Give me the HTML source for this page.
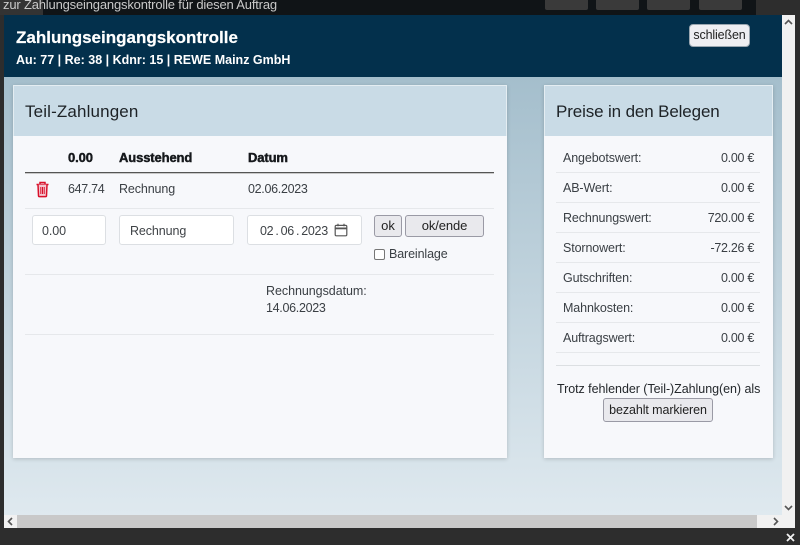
<!DOCTYPE html>
<html lang="de"><head><meta charset="utf-8"><title>Zahlungseingangskontrolle</title>
<style>
*{box-sizing:border-box}
html,body{margin:0;padding:0;width:800px;height:545px;overflow:hidden;background:#2d2d2d;font-family:"Liberation Sans",sans-serif;color:#333}
.a{position:absolute;white-space:nowrap}
.t{position:absolute;white-space:nowrap;font-size:12.5px;line-height:16px;color:#3a3f44;letter-spacing:-.12px}
.d{letter-spacing:-.3px}
.b{font-size:13px;font-weight:700;color:#16191c;letter-spacing:-.12px;-webkit-text-stroke:.45px #16191c}
.l{position:absolute;height:1px;background:#e6e8eb}
.inp{position:absolute;background:#fff;border:1px solid #dcdfe3;border-radius:3px;height:30px;top:215px;font-size:12.5px;line-height:30px;color:#3f4347;letter-spacing:-.1px}
.btn{position:absolute;background:#e9e9ed;border:1px solid #9a9aa5;border-radius:3px;font-size:12.5px;color:#222;text-align:center;letter-spacing:-.05px;white-space:nowrap}
.panel{position:absolute;top:85px;height:373px;background:#f7f8fb;box-shadow:0 1px 4px rgba(0,0,0,.18)}
.ph{position:absolute;left:0;top:0;right:0;height:51px;background:#c9dbe6;border:1px solid #e4edf2;border-bottom:0;font-size:17px;line-height:52px;color:#1d2226;padding-left:11px;white-space:nowrap}
</style></head><body>
<div class="a" style="left:0;top:0;width:43px;height:15px;background:#333"></div>
<div class="a" style="left:43px;top:0;width:713px;height:15px;background:#101417"></div>
<div class="a" style="left:3px;top:-3px;font-size:13px;line-height:16px;color:#c9c9c9;letter-spacing:-.18px">zur Zahlungseingangskontrolle für diesen Auftrag</div>
<div class="a" style="left:545px;top:-4px;width:43px;height:14px;background:#3a3a3a;border-radius:2px"></div>
<div class="a" style="left:596px;top:-4px;width:43px;height:14px;background:#3a3a3a;border-radius:2px"></div>
<div class="a" style="left:647px;top:-4px;width:43px;height:14px;background:#3a3a3a;border-radius:2px"></div>
<div class="a" style="left:699px;top:-4px;width:43px;height:14px;background:#3a3a3a;border-radius:2px"></div>

<!-- modal -->
<div class="a" style="left:4px;top:15px;width:778px;height:500px;background:linear-gradient(#a4beCC 60px,#dfe9ef 100%)"></div>
<div class="a" style="left:4px;top:15px;width:778px;height:62px;background:#03304c"></div>
<div class="a" style="left:16px;top:27px;font-size:17px;line-height:22px;font-weight:700;color:#fff;-webkit-text-stroke:.2px #fff">Zahlungseingangskontrolle</div>
<div class="a" style="left:16px;top:52px;font-size:12.5px;line-height:16px;font-weight:700;color:#fff">Au: 77 | Re: 38 | Kdnr: 15 | REWE Mainz GmbH</div>
<div class="btn" style="left:689px;top:24px;width:61px;height:23px;line-height:21px;background:#eeeef2;border-color:#9aa6b0;border-radius:4px;letter-spacing:-.15px">schließen</div>

<!-- left panel -->
<div class="panel" style="left:13px;width:494px"><div class="ph" style="letter-spacing:.14px">Teil-Zahlungen</div></div>
<div class="t b" style="left:68px;top:150px">0.00</div>
<div class="t b" style="left:119px;top:150px">Ausstehend</div>
<div class="t b" style="left:248px;top:150px">Datum</div>
<div class="a" style="left:25px;top:172px;width:469px;height:1px;background:#555;box-shadow:0 1px 0 #c8c8c8"></div>
<svg class="a" style="left:35px;top:181px" width="15" height="17" viewBox="0 0 15 17" fill="none" stroke="#d8102a" stroke-width="1.5"><path d="M1.5 3.5h12M5 3.2V1.5h5v1.7"/><path d="M3 3.6l.5 11a1 1 0 0 0 1 1h6a1 1 0 0 0 1-1l.5-11" fill="#f4c6cf"/><path d="M5.8 6v7M7.5 6v7M9.2 6v7" stroke-width="1"/></svg>
<div class="t d" style="left:68px;top:181px">647.74</div>
<div class="t" style="left:119px;top:181px">Rechnung</div>
<div class="t d" style="left:248px;top:181px">02.06.2023</div>
<div class="l" style="left:25px;top:208px;width:469px"></div>
<div class="inp" style="left:32px;width:74px;padding-left:9px">0.00</div>
<div class="inp" style="left:119px;width:115px;padding-left:10px">Rechnung</div>
<div class="inp" style="left:247px;width:115px;padding-left:12px;letter-spacing:-.3px;word-spacing:-1.1px">02 . 06 . 2023</div>
<svg class="a" style="left:334px;top:223px" width="14" height="14" viewBox="0 0 14 14" fill="none" stroke="#555" stroke-width="1.2"><rect x="1.2" y="2.4" width="11.6" height="10.4" rx="1.2"/><path d="M1.2 5.4h11.6" stroke-width="1.8"/><path d="M4 .8v2.4M10 .8v2.4"/></svg>
<div class="btn" style="left:374px;top:215px;width:28px;height:22px;line-height:20px;font-size:13px">ok</div>
<div class="btn" style="left:405px;top:215px;width:79px;height:22px;line-height:20px;font-size:13px;letter-spacing:-.1px">ok/ende</div>
<div class="a" style="left:374px;top:249px;width:11px;height:11px;background:#fff;border:1px solid #767676;border-radius:2px"></div>
<div class="t" style="left:389px;top:246px">Bareinlage</div>
<div class="l" style="left:25px;top:274px;width:469px"></div>
<div class="t" style="left:266px;top:283px;letter-spacing:-.05px">Rechnungsdatum:</div>
<div class="t d" style="left:266px;top:300px">14.06.2023</div>
<div class="l" style="left:25px;top:334px;width:469px"></div>

<!-- right panel -->
<div class="panel" style="left:544px;width:229px"><div class="ph" style="letter-spacing:-.13px">Preise in den Belegen</div></div>
<div class="t" style="left:563px;top:150px">Angebotswert:</div><div class="t d" style="right:46px;top:150px">0.00 €</div>
<div class="l" style="left:556px;top:172px;width:204px"></div>
<div class="t" style="left:563px;top:180px">AB-Wert:</div><div class="t d" style="right:46px;top:180px">0.00 €</div>
<div class="l" style="left:556px;top:202px;width:204px"></div>
<div class="t" style="left:563px;top:210px">Rechnungswert:</div><div class="t d" style="right:46px;top:210px">720.00 €</div>
<div class="l" style="left:556px;top:232px;width:204px"></div>
<div class="t" style="left:563px;top:240px">Stornowert:</div><div class="t d" style="right:46px;top:240px">-72.26 €</div>
<div class="l" style="left:556px;top:262px;width:204px"></div>
<div class="t" style="left:563px;top:270px">Gutschriften:</div><div class="t d" style="right:46px;top:270px">0.00 €</div>
<div class="l" style="left:556px;top:292px;width:204px"></div>
<div class="t" style="left:563px;top:300px">Mahnkosten:</div><div class="t d" style="right:46px;top:300px">0.00 €</div>
<div class="l" style="left:556px;top:322px;width:204px"></div>
<div class="t" style="left:563px;top:330px">Auftragswert:</div><div class="t d" style="right:46px;top:330px">0.00 €</div>
<div class="l" style="left:556px;top:352px;width:204px"></div>
<div class="l" style="left:556px;top:365px;width:204px;height:1px;background:#dcdfe2"></div>
<div class="t" style="left:557px;top:381px;color:#24282c;letter-spacing:-.05px">Trotz fehlender (Teil-)Zahlung(en) als</div>
<div class="btn" style="left:603px;top:398px;width:110px;height:24px;line-height:22px;letter-spacing:-.1px">bezahlt markieren</div>

<!-- scrollbars -->
<div class="a" style="left:782px;top:15px;width:13px;height:513px;background:#f1f1f1"></div>
<div class="a" style="left:4px;top:515px;width:778px;height:13px;background:#f1f1f1"></div>
<div class="a" style="left:17px;top:515px;width:740px;height:13px;background:#c9c9c9"></div>
<svg class="a" style="left:784px;top:19px" width="9" height="6" viewBox="0 0 9 6" fill="none" stroke="#555" stroke-width="1.6"><path d="M1 5l3.5-3.5L8 5"/></svg>
<svg class="a" style="left:784px;top:505px" width="9" height="6" viewBox="0 0 9 6" fill="none" stroke="#555" stroke-width="1.6"><path d="M1 1l3.5 3.5L8 1"/></svg>
<svg class="a" style="left:7px;top:517px" width="6" height="9" viewBox="0 0 6 9" fill="none" stroke="#555" stroke-width="1.6"><path d="M5 1L1.5 4.5 5 8"/></svg>
<svg class="a" style="left:773px;top:517px" width="6" height="9" viewBox="0 0 6 9" fill="none" stroke="#555" stroke-width="1.6"><path d="M1 1l3.5 3.5L1 8"/></svg>
<svg class="a" style="left:786px;top:533px" width="9" height="9" viewBox="0 0 9 9" fill="none" stroke="#f2f2f2" stroke-width="1.8"><path d="M1 1l7 7M8 1L1 8"/></svg>
</body></html>
